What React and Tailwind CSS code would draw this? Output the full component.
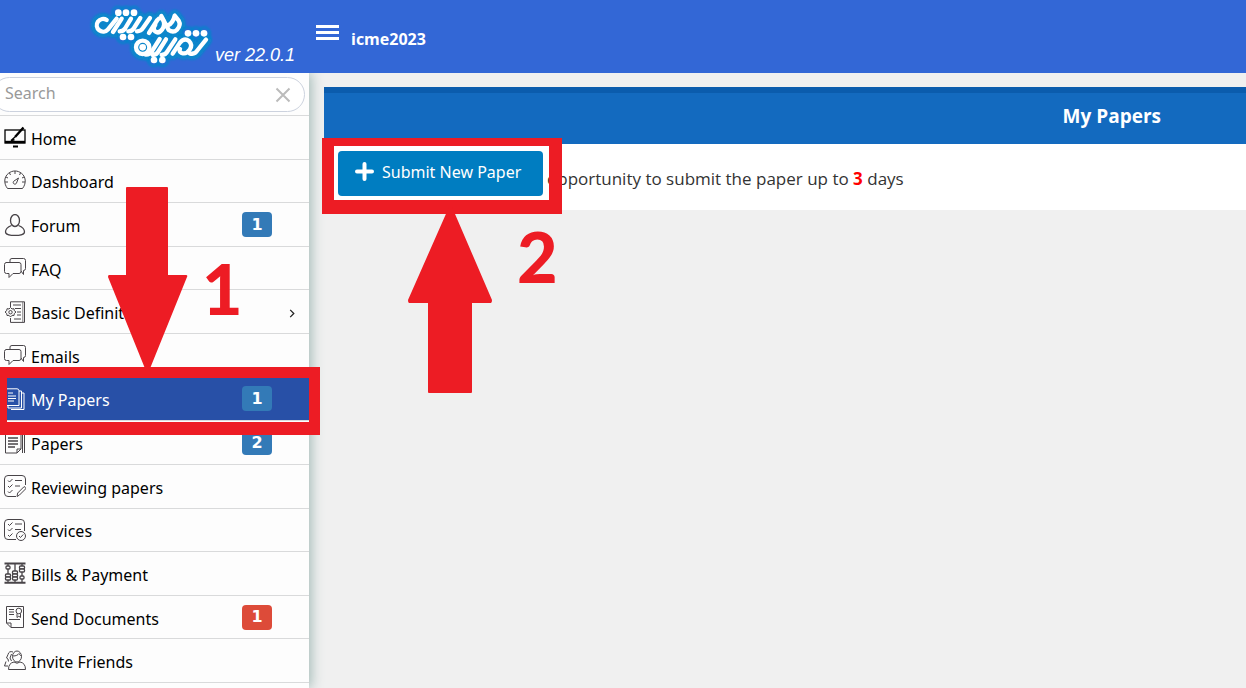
import { useState } from 'react';

const iconPaths = {
    home: (
        <>
            <rect x="1" y="4" width="20" height="13" strokeWidth="1.3" />
            <path d="M1 16h20" strokeWidth="2.4" />
            <path d="M9 20.5h5" strokeWidth="2" />
            <path d="M19.5 1.5L11 11" strokeWidth="2.4" />
            <path d="M11 11l-4 3.5 3.5-.8" strokeWidth="1.4" />
        </>
    ),
    dashboard: (
        <>
            <path d="M3.5 18.5C-.8 13 .3 6.500 4.500 3.300c4-3.100 9-3.100 13 0C21.700 6.500 22.800 13 18.500 18.500z" />
            <path d="M11 1v3M5.500 3l1 2M16.500 3l-1 2M2 7l2 1M20 7l-2 1M1 12h3M21 12h-3" />
            <path d="M14.500 8l-2 5a1.700 1.700 0 1 1-2.500-2z" />
        </>
    ),
    user: (
        <>
            <ellipse cx="11" cy="6.500" rx="4.500" ry="6" strokeWidth="1.300" />
            <path d="M7.500 11.500C3.500 13 1.500 15 1.500 18c0 2 4 3.500 9.500 3.500s9.500-1.500 9.500-3.500c0-3-2-5-6-6.500" strokeWidth="1.300" />
        </>
    ),
    chat: (
        <>
            <path d="M2 5.500h13q2 0 2 2v7q0 2-2 2H9l-4 4v-4H2.500q-2 0-2-2v-7q0-2 2-2z" />
            <path d="M6 5.500V3q0-1.500 2-1.500h11.500q2 0 2 2v8q0 2-2 2v4L17 14" />
        </>
    ),
    definitions: (
        <>
            <path d="M6.500 6V.8h14v20.600h-14V17" />
            <path d="M18.800 1v20" strokeWidth=".7" />
            <path d="M9 4h8M11 7.500h6M13 11h4M13 14h4M10 18h7" />
            <path d="M6.500 6.500l1.500 1.500 2-.3.300 2 1.700 1.300-1.700 1.500-.3 2-2-.2L6.500 16 5 14.300l-2 .2-.3-2L1 11l1.700-1.300.3-2 2 .3z" />
            <circle cx="6.500" cy="11.200" r="1.700" />
        </>
    ),
    papers: (
        <>
            <path d="M1 .8h12q2 0 2 2v14.700H1z" />
            <path d="M15 3h2.500v17H4v-2.500" />
            <path d="M17.500 5H20v16.500H7" />
            <path d="M4 5h5M4 8h8M4 10.500h8M4 13h6" />
        </>
    ),
    allPapers: (
        <>
            <path d="M1.500 1v20H13l4-4V1z" />
            <path d="M13 21v-4h4M18.500 1v20M20.500 1v20" />
            <path d="M4 6h10M4 9h10M4 12h10M4 15h7" strokeWidth="1.400" />
        </>
    ),
    review: (
        <>
            <path d="M12 21.500H4q-3.500 0-3.500-3.500V4Q.5.500 4 .500h14q3.500 0 3.500 3.500v6" />
            <path d="M4 5.500l1.500 1.500L8.500 4M4 11l1.500 1.500 3-3M4 16.500L5.500 18l3-3M11 5.500h7M11 11h5" />
            <path d="M13 21.500l.7-3.500 6-6q1.500-.8 2 .5.300.8-.2 1.500l-6 6z" />
        </>
    ),
    services: (
        <>
            <path d="M12 20.500H4q-3.500 0-3.500-3.500V4Q.5.500 4 .500h13q3.500 0 3.500 3.500v8" />
            <path d="M4 5l1.500 1.500 3-3M4 10.500L5.500 12l3-3M4 16l1.500 1.500 3-3M11 5h7M11 10.500h6" />
            <circle cx="17" cy="17" r="4.500" />
            <path d="M15 17l1.500 1.500 2.700-3" />
        </>
    ),
    bills: (
        <>
            <path d="M.5 1.500h21M.5 20.800h21" strokeWidth="2" />
            <path d="M4 2v18M11 2v18M18 2v18" strokeWidth="1.300" />
            <g fill="#fdfdfd" strokeWidth="1.300">
                <rect x="2" y="4" width="4" height="3" rx="1" />
                <rect x="1.500" y="12" width="5" height="3" rx="1" />
                <rect x="1.500" y="15" width="5" height="3" rx="1" />
                <rect x="8.500" y="9" width="5" height="3" rx="1" />
                <rect x="8.500" y="12" width="5" height="3" rx="1" />
                <rect x="8.500" y="15" width="5" height="3" rx="1" />
                <rect x="15.500" y="4" width="5" height="3" rx="1" />
                <rect x="15.500" y="7" width="5" height="3" rx="1" />
                <rect x="16" y="14" width="4" height="3" rx="1" />
            </g>
        </>
    ),
    documents: (
        <>
            <path d="M2.500.500h17v21H7l-4.500-4.500z" />
            <path d="M2.500 17H7v4.500M5 3.500h5M5 6h5M5 8.500h5M5 13.500h11" />
            <circle cx="14.800" cy="5" r="2.800" />
            <path d="M13 7.500v4l1.800-1.300 1.700 1.300v-4" />
        </>
    ),
    friends: (
        <>
            <ellipse cx="13" cy="6.500" rx="4.500" ry="5.500" />
            <path d="M9 6c3 0 5-1 6-2.500.5 1.500 1.500 2 2.500 2.500" />
            <path d="M10 12q-5.500 1-5.500 7.500h17q0-6.500-5.500-7.500-3 2.500-6 0z" />
            <path d="M9 2Q5 .500 4 4.500L2.500 8 4 9l.5 2.500M2 11.500L.5 16H4M7.500 4L6 8l1.500 3" />
        </>
    ),
};

const menuItems = [
    { label: 'Home', icon: 'home' },
    { label: 'Dashboard', icon: 'dashboard' },
    { label: 'Forum', icon: 'user', count: 1 },
    { label: 'FAQ', icon: 'chat' },
    { label: 'Basic Definitions', icon: 'definitions', hasChildren: true },
    { label: 'Emails', icon: 'chat' },
    { label: 'My Papers', icon: 'papers', count: 1, active: true },
    { label: 'Papers', icon: 'allPapers', count: 2 },
    { label: 'Reviewing papers', icon: 'review' },
    { label: 'Services', icon: 'services' },
    { label: 'Bills & Payment', icon: 'bills' },
    { label: 'Send Documents', icon: 'documents', count: 1, urgent: true },
    { label: 'Invite Friends', icon: 'friends' },
];

function MenuIcon({ name, active }) {
    return (
        <svg
            viewBox="0 0 22 22"
            className={`size-[22px] shrink-0 ${active ? 'text-white' : name === 'home' ? 'text-black' : 'text-[#484448]'}`}
            fill="none"
            stroke="currentColor"
            strokeWidth="1"
            aria-hidden="true"
        >
            {iconPaths[name]}
        </svg>
    );
}

function LogoStrokes() {
    return (
        <>
            {/* upper word */}
            <path d="M80 60A19 19 0 1 0 84 88L110 56" />
            <path d="M99 96L125 56M119 94q12 0 17-10l17-28M145 94q12 0 17-10l19-30M171 94q12 0 18-10l21-30" />
            <path d="M207 99l25-39q9-11 17-1 8 15-3 30-10 13-21 5-8-8 1-20" />
            <path d="M244 48l22 42q14 10 25-1 13-13 5-27l-12-15q-5 22-20 29" />
            {/* lower word */}
            <circle cx="188" cy="142" r="20" />
            <path d="M198 164q12 0 19-12l22-35M218 165q12 0 18-12l22-35M245 165q12 0 18-12l23-35" />
            <path d="M278 161l22-33q13-16 27-5 12 12 2 26-10 15-24 10-9-4-5-12" />
            <path d="M329 160q15 5 24-10l25-31" />
        </>
    );
}

const logoDots = [
    [115, 38], [138, 38], [162, 38], [129, 111], [153, 111], [188, 142],
    [324, 100], [348, 100], [372, 100], [222, 180], [247, 180],
];

function Logo() {
    return (
        <svg viewBox="0 0 399 219" className="h-[73px] w-[133px]" fill="none" strokeLinecap="round" strokeLinejoin="round" role="img" aria-label="Logo">
            <defs>
                <filter id="glow" x="-10%" y="-20%" width="120%" height="140%">
                    <feGaussianBlur stdDeviation="3" />
                </filter>
            </defs>
            <g stroke="#0786cb" strokeWidth="36" filter="url(#glow)">
                <LogoStrokes />
                {logoDots.map(([x, y]) => <circle key={`${x}-${y}`} cx={x} cy={y} r="3" />)}
            </g>
            <g stroke="#fff" strokeWidth="13">
                <LogoStrokes />
            </g>
            {logoDots.map(([x, y]) => <circle key={`${x}-${y}`} cx={x} cy={y} r="10" fill="#fff" />)}
        </svg>
    );
}

function MenuItem({ item }) {
    const { label, icon, count, active, urgent, hasChildren } = item;

    return (
        <li className="border-b border-[#d9dadb]">
            <a
                href="#"
                aria-current={active ? 'page' : undefined}
                className={`flex h-full items-center pl-1 ${active ? 'bg-[#2850a7] text-white' : 'text-black'}`}
            >
                <MenuIcon name={icon} active={active} />
                <span className="ml-[5px] pt-[3px]">{label}</span>
                {count && (
                    <span
                        className={`mr-[37px] ml-auto flex h-[25px] w-[30px] items-center justify-center rounded font-['DejaVu_Sans',sans-serif] font-bold text-white ${urgent ? 'bg-[#dd4b39]' : 'bg-[#337ab7]'}`}
                    >
                        {count}
                    </span>
                )}
                {hasChildren && (
                    <svg viewBox="0 0 6 10" className="mt-1 mr-[14px] ml-auto h-[9px] w-[6px]" fill="none" stroke="#222" strokeWidth="1.400" aria-hidden="true">
                        <path d="M1 1l4 4-4 4" />
                    </svg>
                )}
            </a>
        </li>
    );
}

function Sidebar() {
    const [search, setSearch] = useState('');

    return (
        <aside className="z-10 w-[309px] shrink-0 bg-[#fdfdfd] shadow-[2px_0_12px_#9fb8b4]">
            <div className="relative border-b border-[#d9dadb] pt-1 pr-1 pb-[3px]">
                <input
                    type="text"
                    aria-label="Search"
                    placeholder="Search"
                    value={search}
                    onChange={(e) => setSearch(e.target.value)}
                    className="-ml-2 block h-[35px] w-[313px] rounded-full border border-[#ccd2de] bg-white pr-12 pb-1 pl-3 font-['Noto_Sans',sans-serif] text-base text-black placeholder:text-[#999] focus:outline-none"
                />
                <button
                    type="button"
                    aria-label="Clear search"
                    onClick={() => setSearch('')}
                    className="absolute top-[14px] right-[18px] text-[#bbb]"
                >
                    <svg viewBox="0 0 16 16" className="size-4" fill="none" stroke="currentColor" strokeWidth="2" aria-hidden="true">
                        <path d="M1.500 1.500l13 13M14.500 1.500l-13 13" />
                    </svg>
                </button>
            </div>
            <nav>
                <ul className="grid h-[567px] auto-rows-fr text-base">
                    {menuItems.map((item) => <MenuItem key={item.label} item={item} />)}
                </ul>
            </nav>
        </aside>
    );
}

// Numbered steps drawn over the page
function Annotations() {
    return (
        <div className="pointer-events-none absolute inset-0 z-20 overflow-hidden font-['Lato',sans-serif] text-[70px] leading-none font-black text-[#ed1c24]">
            <div className="absolute top-[367px] left-0 h-[68px] w-[320px] border-t-[11px] border-r-[11px] border-b-[13px] border-l-[7px] border-[#ed1c24]" />
            <div className="absolute top-[138px] left-[322px] h-[76px] w-[240px] border-t-8 border-r-[13px] border-b-[14px] border-l-[12px] border-[#ed1c24]" />
            <svg viewBox="0 0 80 184" className="absolute top-[187px] left-[108px] h-[184px] w-[80px]" fill="currentColor" aria-hidden="true">
                <path d="M19 0h40q1 0 1 1v87h18q2 0 1 2L41 184h-3L0 90q0-2 1-2h17V1q0-1 1-1z" />
            </svg>
            <svg viewBox="0 0 84 186" className="absolute top-[207px] left-[408px] h-[186px] w-[84px]" fill="currentColor" aria-hidden="true">
                <path d="M41 0h3l40 93q0 3-1 3H64v89q0 1-1 1H21q-1 0-1-1V96H1q-1 0-1-3z" />
            </svg>
            <span className="absolute top-[253px] left-[202px]">1</span>
            <span className="absolute top-[221px] left-[517px]">2</span>
        </div>
    );
}

export default function App() {
    return (
        <div className="relative flex min-h-screen flex-col overflow-hidden bg-[#f0f0f0] font-['Noto_Sans',sans-serif]">
            <header className="z-20 flex h-[73px] shrink-0 bg-[#3367d6] text-white">
                <div className="flex w-[309px] shrink-0 pl-20">
                    <Logo />
                    <span className="mt-[43px] ml-[2px] font-['Liberation_Sans',sans-serif] text-lg leading-6 whitespace-nowrap italic">
                        ver 22.0.1
                    </span>
                </div>
                <button type="button" aria-label="Toggle menu" className="mt-6 ml-[7px] h-[17px] w-[23px]">
                    <svg viewBox="0 0 23 17" className="h-[17px] w-[23px]" stroke="currentColor" strokeWidth="3" aria-hidden="true">
                        <path d="M0 2.500h23M0 8.500h23M0 14.500h23" />
                    </svg>
                </button>
                <span className="mt-[27px] ml-3 font-['Open_Sans',sans-serif] text-base font-bold">icme2023</span>
            </header>

            <div className="flex flex-1">
                <Sidebar />
                <main className="min-w-0 flex-1 pt-[14px] pl-[15px] font-['Open_Sans',sans-serif]">
                    <h1 className="flex h-[57px] items-center justify-end border-t-[6px] border-[#0b5cad] bg-[#136abf] pr-[85px] pb-1 text-[19px] font-bold text-white">
                        My Papers
                    </h1>
                    <div className="flex bg-white px-[14px] pt-[7px] pb-[14px]">
                        <button type="button" className="flex h-[45px] w-[205px] items-center rounded bg-[#007dc1] pb-1 pl-[17px] font-['Noto_Sans',sans-serif] text-base whitespace-nowrap text-white">
                            <svg viewBox="0 0 19 19" className="mr-2 size-[19px]" stroke="currentColor" strokeWidth="4" strokeLinecap="round" aria-hidden="true">
                                <path d="M9.500 2v15M2 9.500h15" />
                            </svg>
                            Submit New Paper
                        </button>
                        <p className="mt-4 ml-1 text-[17px] leading-6 text-[#333]">
                            opportunity to submit the paper up to <b className="text-[#f00]">3</b> days
                        </p>
                    </div>
                </main>
            </div>
            <Annotations />
        </div>
    );
}
